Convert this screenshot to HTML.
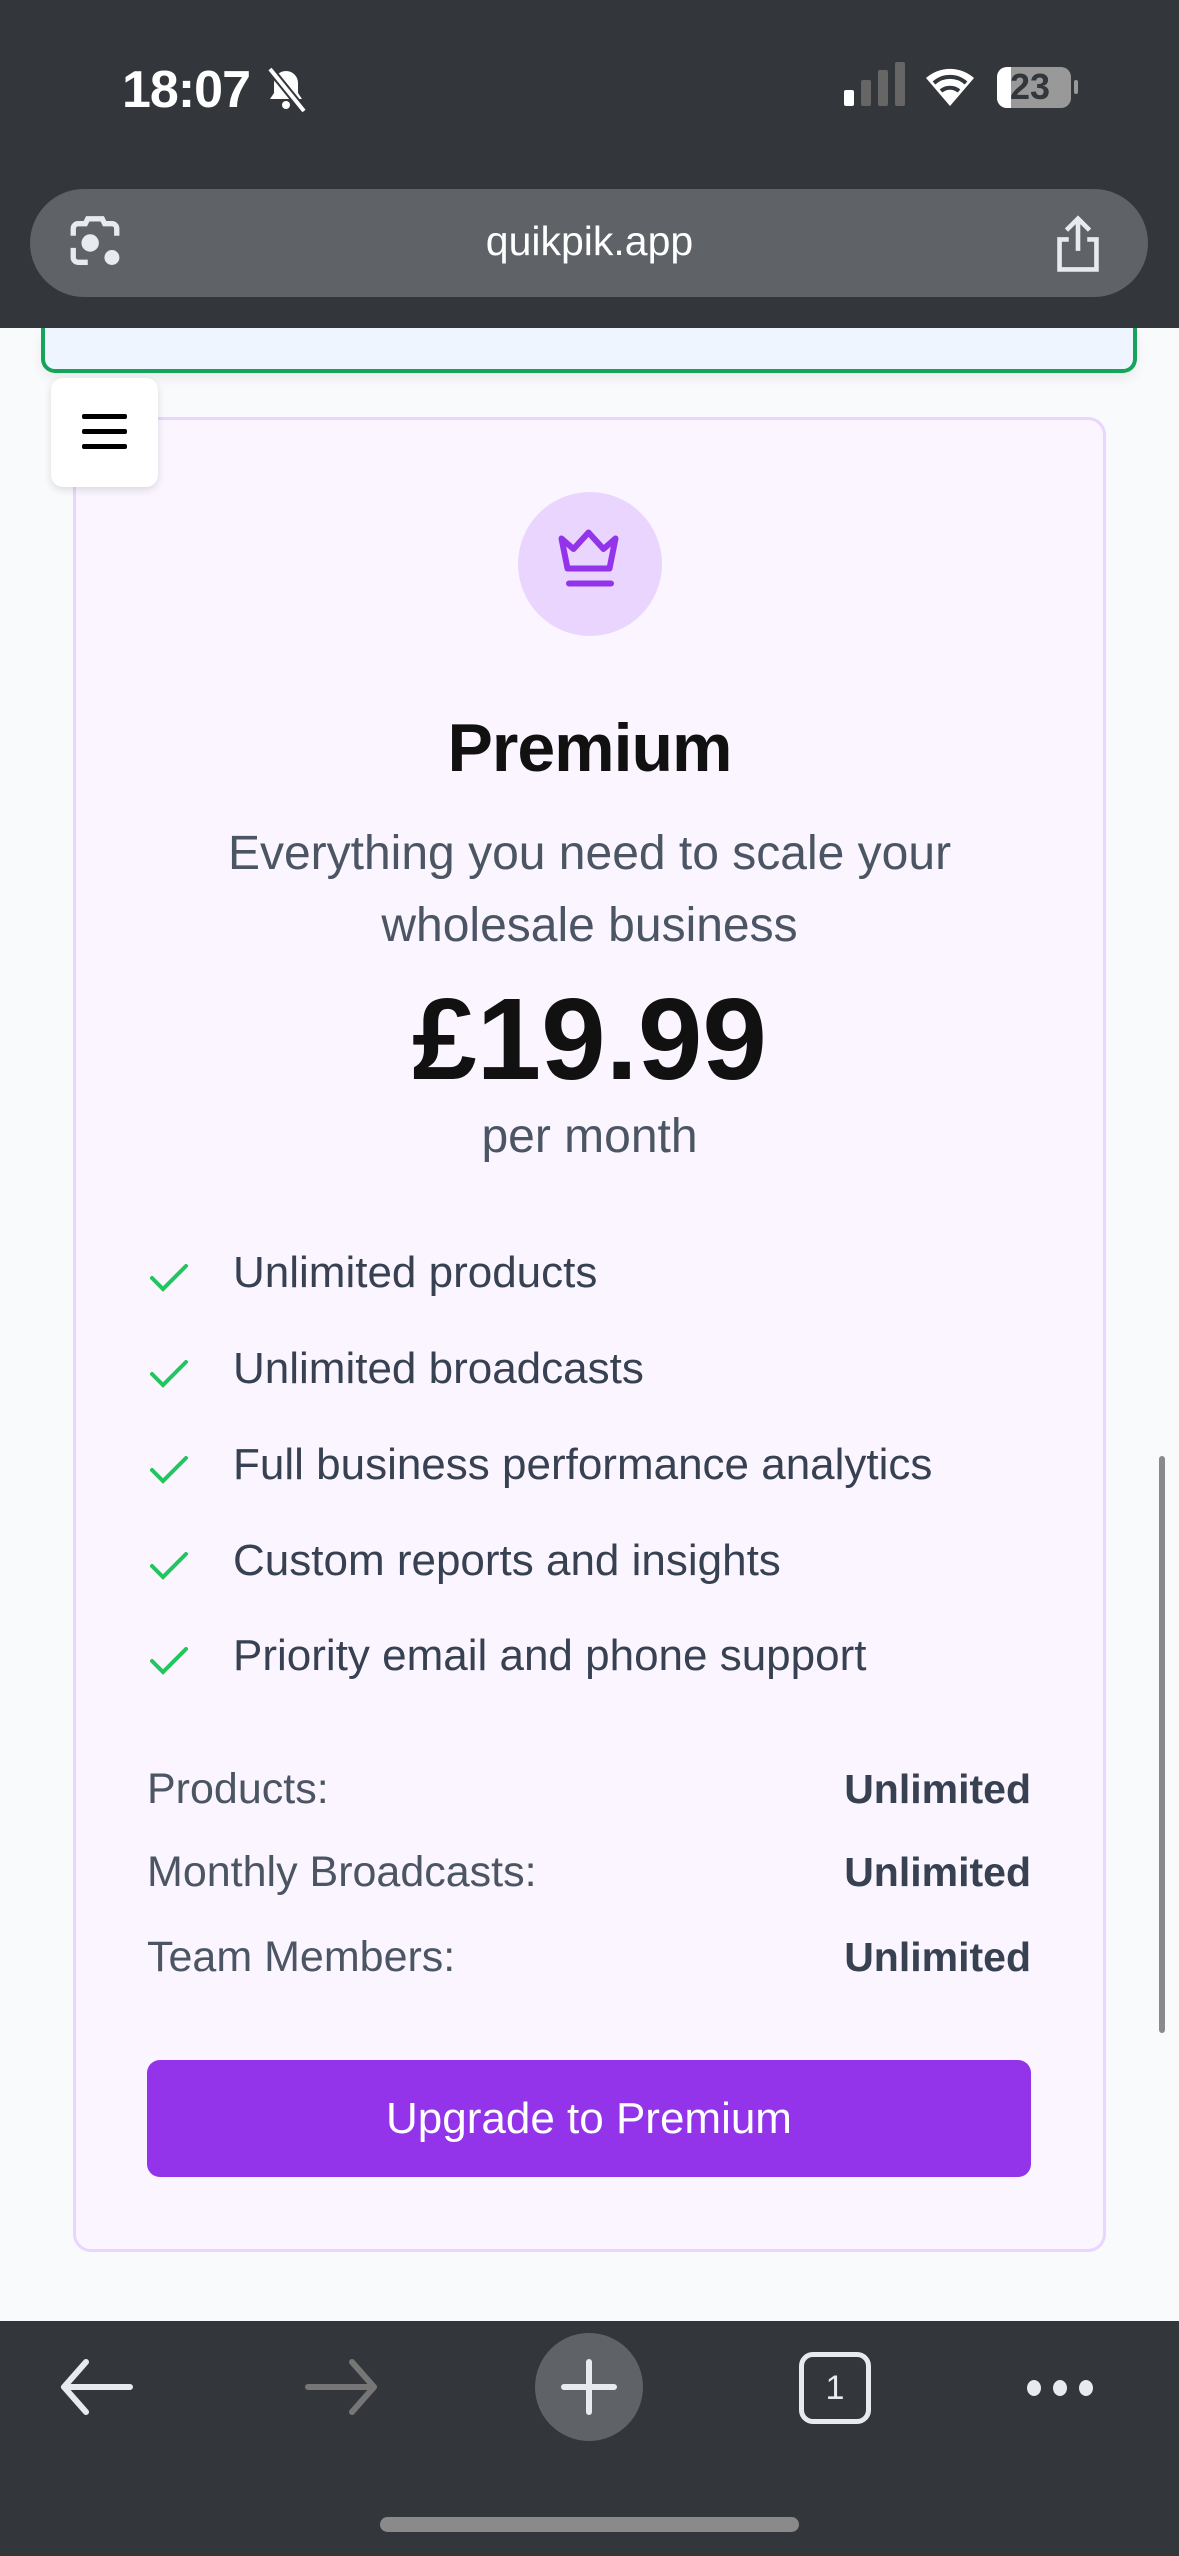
<!DOCTYPE html>
<html><head><meta charset="utf-8"><style>
*{margin:0;padding:0;box-sizing:border-box}
body{width:1179px;height:2556px;background:#f9fafb;font-family:"Liberation Sans",sans-serif;position:relative;overflow:hidden}
.abs{position:absolute}
.top{left:0;top:0;width:1179px;height:328px;background:#33363a}
.bot{left:0;top:2321px;width:1179px;height:235px;background:#33363a}
.feat{position:absolute;left:233px;font-size:44px;color:#374151;line-height:48px}
.chk{position:absolute;left:150px}
.row{position:absolute;left:147px;width:884px;font-size:43px;line-height:48px;color:#4b5563;display:flex;justify-content:space-between}
.row b{color:#374151;font-weight:bold;font-size:41px;letter-spacing:0}
</style></head><body>
<div class="abs" style="left:41px;top:328px;width:1096px;height:45px;background:#eef5ff;border:4px solid #16a35a;border-top:none;border-radius:0 0 14px 14px;box-shadow:0 6px 12px rgba(0,0,0,.06)"></div>
<div class="abs top"></div>
<div class="abs" style="left:122px;top:60px;font-size:52px;color:#fff;font-weight:bold;letter-spacing:-1px">18:07</div>
<svg class="abs" style="left:262px;top:64px" width="48" height="50" viewBox="0 0 24 24"><path d="M12 3a6 6 0 0 0-6 6v5l-2 3h16l-2-3V9a6 6 0 0 0-6-6z" fill="#fff"/><circle cx="12" cy="20" r="2" fill="#fff"/><path d="M4 2L21 23" stroke="#33363a" stroke-width="4"/><path d="M4 2L21 23" stroke="#fff" stroke-width="2"/></svg>
<div class="abs" style="left:844px;top:90px;width:10px;height:16px;background:#fff;border-radius:2px"></div>
<div class="abs" style="left:861px;top:80px;width:10px;height:26px;background:#666;border-radius:2px"></div>
<div class="abs" style="left:878px;top:70px;width:10px;height:36px;background:#666;border-radius:2px"></div>
<div class="abs" style="left:895px;top:62px;width:10px;height:44px;background:#666;border-radius:2px"></div>
<svg class="abs" style="left:924px;top:62px" width="52" height="46" viewBox="0 0 26 23"><path d="M13 22L1 8A18 18 0 0 1 25 8Z" fill="#fff"/><path d="M5 10.5A12 12 0 0 1 21 10.5M8.5 14.5A7 7 0 0 1 17.5 14.5" stroke="#33363a" stroke-width="2" fill="none"/></svg>
<div class="abs" style="left:997px;top:67px;width:74px;height:41px;border-radius:10px;background:#999;overflow:hidden"><div style="width:14px;height:41px;background:#fff"></div></div>
<div class="abs" style="left:1010px;top:66px;font-size:36px;font-weight:bold;color:#33363a">23</div>
<div class="abs" style="left:1074px;top:80px;width:4px;height:14px;background:#999;border-radius:2px"></div>
<div class="abs" style="left:30px;top:189px;width:1118px;height:108px;border-radius:54px;background:#5f6367"></div>
<svg class="abs" style="left:66px;top:214px" width="58" height="58" viewBox="0 0 24 24" fill="none" stroke="#e8eaed" stroke-width="2.2"><path d="M3 9V6a2 2 0 0 1 2-2h3l1-2h6l1 2h3a2 2 0 0 1 2 2v3M3 14v4a2 2 0 0 0 2 2h4"/><circle cx="10" cy="12" r="2.5" fill="#e8eaed"/><circle cx="19" cy="18" r="2" fill="#e8eaed"/></svg>
<div class="abs" style="left:0;width:1179px;top:218px;text-align:center;font-size:41px;color:#fff">quikpik.app</div>
<svg class="abs" style="left:1050px;top:214px" width="56" height="60" viewBox="0 0 24 26" fill="none" stroke="#e8eaed" stroke-width="2"><path d="M12 2v14M7 7l5-5 5 5M8 11H4v13h16V11h-4"/></svg>
<div class="abs" style="left:73px;top:417px;width:1033px;height:1835px;background:#faf5ff;border:3px solid #e9d5ff;border-radius:18px"></div>
<div class="abs" style="left:51px;top:378px;width:107px;height:109px;background:#fff;border-radius:12px;box-shadow:0 3px 8px rgba(0,0,0,.12)"></div>
<div class="abs" style="left:82px;top:414px;width:45px;height:5px;background:#000;border-radius:2px"></div>
<div class="abs" style="left:82px;top:429px;width:45px;height:5px;background:#000;border-radius:2px"></div>
<div class="abs" style="left:82px;top:444px;width:45px;height:5px;background:#000;border-radius:2px"></div>
<div class="abs" style="left:518px;top:492px;width:144px;height:144px;border-radius:50%;background:#ead5ff"></div>
<svg class="abs" style="left:554px;top:528px" width="72" height="72" viewBox="0 0 24 24" fill="none" stroke="#9333ea" stroke-width="2" stroke-linecap="round" stroke-linejoin="round"><path d="M2.5 3.5l4 3.5 5-5.5 5 5.5 4-3.5-2 10h-14z M5 18.5h14"/></svg>
<div class="abs" style="left:0;width:1179px;top:709px;text-align:center;font-size:68px;font-weight:bold;color:#111;letter-spacing:-1px">Premium</div>
<div class="abs" style="left:0;width:1179px;top:818px;text-align:center;font-size:48px;line-height:72px;color:#4b5563">Everything you need to scale your<br>wholesale business</div>
<div class="abs" style="left:0;width:1179px;top:972px;text-align:center;font-size:116px;font-weight:bold;color:#111;letter-spacing:0">£19.99</div>
<div class="abs" style="left:0;width:1179px;top:1109px;text-align:center;font-size:48px;color:#4b5563">per month</div>
<svg class="chk" style="top:1262px" width="40" height="32" viewBox="0 0 40 32"><path d="M2 16l11 11L36 4" stroke="#22c55e" stroke-width="4" fill="none" stroke-linecap="round"/></svg>
<div class="feat" style="top:1249px">Unlimited products</div>
<svg class="chk" style="top:1358px" width="40" height="32" viewBox="0 0 40 32"><path d="M2 16l11 11L36 4" stroke="#22c55e" stroke-width="4" fill="none" stroke-linecap="round"/></svg>
<div class="feat" style="top:1345px">Unlimited broadcasts</div>
<svg class="chk" style="top:1454px" width="40" height="32" viewBox="0 0 40 32"><path d="M2 16l11 11L36 4" stroke="#22c55e" stroke-width="4" fill="none" stroke-linecap="round"/></svg>
<div class="feat" style="top:1441px">Full business performance analytics</div>
<svg class="chk" style="top:1550px" width="40" height="32" viewBox="0 0 40 32"><path d="M2 16l11 11L36 4" stroke="#22c55e" stroke-width="4" fill="none" stroke-linecap="round"/></svg>
<div class="feat" style="top:1537px">Custom reports and insights</div>
<svg class="chk" style="top:1645px" width="40" height="32" viewBox="0 0 40 32"><path d="M2 16l11 11L36 4" stroke="#22c55e" stroke-width="4" fill="none" stroke-linecap="round"/></svg>
<div class="feat" style="top:1632px">Priority email and phone support</div>
<div class="row" style="top:1765px"><span>Products:</span><b>Unlimited</b></div>
<div class="row" style="top:1848px"><span>Monthly Broadcasts:</span><b>Unlimited</b></div>
<div class="row" style="top:1933px"><span>Team Members:</span><b>Unlimited</b></div>
<div class="abs" style="left:147px;top:2060px;width:884px;height:117px;background:#9333ea;border-radius:13px;color:#fff;font-size:44px;text-align:center;line-height:117px">Upgrade to Premium</div>
<div class="abs" style="left:1159px;top:1456px;width:6px;height:577px;background:#8a8a8a;border-radius:3px"></div>
<div class="abs bot"></div>
<svg class="abs" style="left:58px;top:2358px" width="76" height="58" viewBox="0 0 38 29" fill="none" stroke="#e8eaed" stroke-width="3" stroke-linecap="round" stroke-linejoin="round"><path d="M36 14.5H4M14 2L3 14.5 14 27"/></svg>
<svg class="abs" style="left:304px;top:2358px" width="76" height="58" viewBox="0 0 38 29" fill="none" stroke="#767676" stroke-width="3" stroke-linecap="round" stroke-linejoin="round"><path d="M2 14.5h32M24 2l11 12.5L24 27"/></svg>
<div class="abs" style="left:535px;top:2333px;width:108px;height:108px;border-radius:50%;background:#5f6367"></div>
<div class="abs" style="left:561px;top:2384px;width:56px;height:6px;background:#e8eaed;border-radius:3px"></div>
<div class="abs" style="left:586px;top:2359px;width:6px;height:56px;background:#e8eaed;border-radius:3px"></div>
<div class="abs" style="left:799px;top:2352px;width:72px;height:72px;border:5px solid #e8eaed;border-radius:14px;color:#e8eaed;font-size:34px;text-align:center;line-height:62px">1</div>
<div class="abs" style="left:1027px;top:2380px;width:14px;height:16px;background:#e8eaed;border-radius:50%"></div>
<div class="abs" style="left:1053px;top:2380px;width:14px;height:16px;background:#e8eaed;border-radius:50%"></div>
<div class="abs" style="left:1079px;top:2380px;width:14px;height:16px;background:#e8eaed;border-radius:50%"></div>
<div class="abs" style="left:380px;top:2517px;width:419px;height:15px;background:#8a8a8a;border-radius:8px"></div>
</body></html>
